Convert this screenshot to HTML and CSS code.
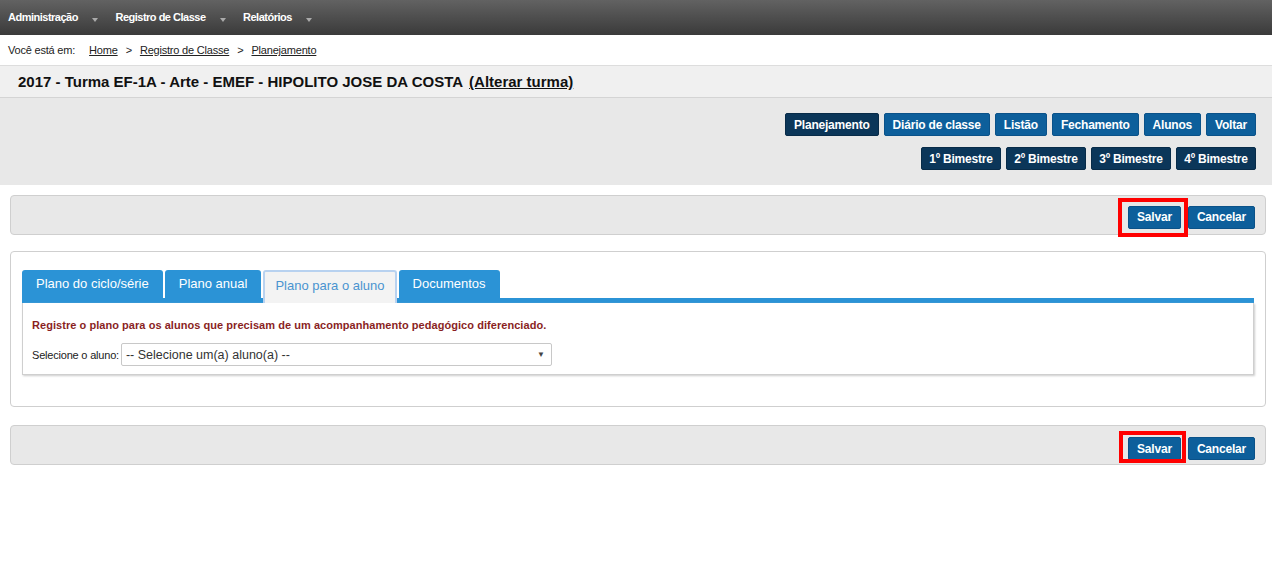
FILE: index.html
```html
<!DOCTYPE html>
<html lang="pt-BR">

<head>
    <meta charset="UTF-8">
    <title>Planejamento</title>
    <link rel="stylesheet" href="styles.css">
</head>

<body>
    <div class="topnav">
        <span class="nav-item">Administração <span class="caret"></span></span>
        <span class="nav-item">Registro de Classe <span class="caret"></span></span>
        <span class="nav-item">Relatórios <span class="caret"></span></span>
    </div>

    <div class="breadcrumb">
        <span class="crumb-label">Você está em:</span>
        <a href="#">Home</a><span class="sep">&gt;</span>
        <a href="#">Registro de Classe</a><span class="sep">&gt;</span>
        <a href="#">Planejamento</a>
    </div>

    <div class="title-bar">
        2017 - Turma EF-1A - Arte - EMEF - HIPOLITO JOSE DA COSTA <a href="#" class="change-link">(Alterar turma)</a>
    </div>

    <div class="actions">
        <div class="btn-row">
            <button class="btn btn-dark">Planejamento</button>
            <button class="btn">Diário de classe</button>
            <button class="btn">Listão</button>
            <button class="btn">Fechamento</button>
            <button class="btn">Alunos</button>
            <button class="btn">Voltar</button>
        </div>
        <div class="btn-row">
            <button class="btn btn-dark btn-term">1º Bimestre</button>
            <button class="btn btn-dark btn-term">2º Bimestre</button>
            <button class="btn btn-dark btn-term">3º Bimestre</button>
            <button class="btn btn-dark btn-term">4º Bimestre</button>
        </div>
    </div>

    <div class="toolbar">
        <span class="highlight"><button class="btn">Salvar</button></span>
        <button class="btn">Cancelar</button>
    </div>

    <div class="panel">
        <div class="tabs">
            <span class="tab">Plano do ciclo/série</span>
            <span class="tab">Plano anual</span>
            <span class="tab tab-active">Plano para o aluno</span>
            <span class="tab">Documentos</span>
        </div>
        <div class="tab-content">
            <p class="notice">Registre o plano para os alunos que precisam de um acompanhamento pedagógico diferenciado.</p>
            <div class="field">
                <label>Selecione o aluno:</label>
                <div class="select">
                    <span>-- Selecione um(a) aluno(a) --</span>
                    <span class="select-arrow">▼</span>
                </div>
            </div>
        </div>
    </div>

    <div class="toolbar toolbar-bottom">
        <span class="highlight highlight-bottom"><button class="btn">Salvar</button></span>
        <button class="btn">Cancelar</button>
    </div>
</body>

</html>
```

FILE: styles.css
```css
body {
    margin: 0;
    font-family: 'Liberation Sans', Arial, sans-serif;
    color: #222;
    background-color: #fff;
}

.topnav {
    height: 35px;
    display: flex;
    align-items: center;
    padding-left: 8px;
    background: linear-gradient(#626262, #3a3a3a);
}

.nav-item {
    color: #fff;
    font-size: 11px;
    font-weight: bold;
    letter-spacing: -0.5px;
    margin-right: 17px;
    margin-top: -1px;
}

.caret {
    display: inline-block;
    width: 0;
    height: 0;
    border-left: 3px solid transparent;
    border-right: 3px solid transparent;
    border-top: 4px solid #aaa;
    margin-left: 12px;
    vertical-align: -1px;
}

.breadcrumb {
    height: 30px;
    display: flex;
    align-items: center;
    padding-left: 8px;
    font-size: 11px;
    letter-spacing: -0.2px;
    border-bottom: 1px solid #ddd;
}

.crumb-label {
    margin-right: 14px;
}

.breadcrumb a {
    color: #222;
}

.sep {
    margin: 0 8px;
}

.title-bar {
    height: 31px;
    display: flex;
    align-items: center;
    padding-left: 18px;
    background-color: #f0f0f0;
    border-bottom: 1px solid #d4d4d4;
    font-size: 15px;
    font-weight: bold;
    color: #111;
}

.change-link {
    color: #111;
    margin-left: 6px;
}

.actions {
    height: 87px;
    background-color: #e8e8e8;
    padding: 15px 16px 0 0;
    box-sizing: border-box;
}

.btn-row {
    display: flex;
    justify-content: flex-end;
    gap: 5px;
    margin-bottom: 11px;
}

.btn {
    font-family: 'Liberation Sans', Arial, sans-serif;
    font-size: 12px;
    font-weight: bold;
    letter-spacing: -0.2px;
    color: #fff;
    background-color: #0d5f9b;
    border: 1px solid #0a5289;
    border-radius: 2px;
    height: 23px;
    padding: 0 8px;
    cursor: pointer;
}

.btn-dark {
    background-color: #0b3659;
    border-color: #082b48;
}

.btn-term {
    width: 80px;
    padding: 0;
}

.toolbar {
    margin: 10px 6px 0 10px;
    height: 40px;
    box-sizing: border-box;
    background-color: #e8e8e8;
    border: 1px solid #cfcfcf;
    border-radius: 4px;
    display: flex;
    justify-content: flex-end;
    align-items: center;
    padding: 4px 10px 0 0;
    gap: 7px;
}

.toolbar-bottom {
    margin-top: 18px;
    padding-top: 7px;
}

/* red annotation frame drawn over the Salvar button */
.highlight {
    position: relative;
    display: inline-flex;
}

.highlight::after {
    content: "";
    position: absolute;
    left: -10px;
    right: -7px;
    top: -8px;
    bottom: -8px;
    border: 4px solid #f00;
}

.highlight-bottom::after {
    left: -9px;
    right: -5px;
    top: -6px;
    bottom: -3px;
}

.panel {
    margin: 16px 6px 0 10px;
    height: 156px;
    box-sizing: border-box;
    border: 1px solid #cfcfcf;
    border-radius: 4px;
    padding: 18px 11px 0 11px;
}

.tabs {
    display: flex;
    gap: 2px;
    border-bottom: 5px solid #2b93d6;
}

.tab {
    font-size: 13px;
    color: #fff;
    background-color: #2b93d6;
    border-radius: 3px 3px 0 0;
    height: 28px;
    line-height: 28px;
    padding: 0 14px;
}

.tab-active {
    color: #4a93d0;
    background-color: #f3f3f3;
    border: 2px solid #b8d2f0;
    border-bottom: none;
    height: 31px;
    line-height: 27px;
    padding: 0 10px;
    margin-bottom: -5px;
}

.tab-content {
    height: 72px;
    box-sizing: border-box;
    border: 1px solid #cfcfcf;
    border-top: none;
    box-shadow: 1px 1px 2px #ccc;
    padding: 16px 9px 0 9px;
}

.notice {
    margin: 0 0 12px 0;
    font-size: 11px;
    font-weight: bold;
    letter-spacing: 0.05px;
    color: #8a1f1f;
}

.field {
    display: flex;
    align-items: center;
    font-size: 11px;
}

.field label {
    letter-spacing: -0.2px;
    margin-right: 2px;
}

.select {
    width: 431px;
    height: 23px;
    box-sizing: border-box;
    border: 1px solid #c8c8c8;
    border-radius: 2px;
    display: flex;
    align-items: center;
    justify-content: space-between;
    padding: 0 6px 0 4px;
    font-size: 12.5px;
    color: #333;
}

.select-arrow {
    font-size: 8px;
    color: #444;
}
```
